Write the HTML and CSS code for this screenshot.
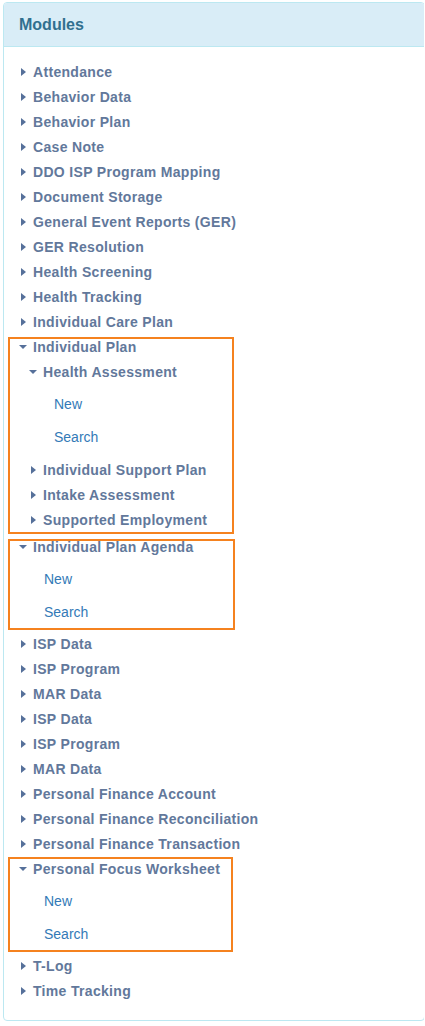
FILE: index.html
```html
<!DOCTYPE html>
<html>
<head>
<meta charset="utf-8">
<link rel="stylesheet" href="styles.css">
</head>
<body>
<div class="panel">
  <div class="panel-heading"><h3 class="panel-title">Modules</h3></div>
  <div class="panel-body">
    <ul class="tree">
      <li><a class="row"><span class="caret"></span>Attendance</a></li>
      <li><a class="row"><span class="caret"></span>Behavior Data</a></li>
      <li><a class="row"><span class="caret"></span>Behavior Plan</a></li>
      <li><a class="row"><span class="caret"></span>Case Note</a></li>
      <li><a class="row"><span class="caret"></span>DDO ISP Program Mapping</a></li>
      <li><a class="row"><span class="caret"></span>Document Storage</a></li>
      <li><a class="row"><span class="caret"></span>General Event Reports (GER)</a></li>
      <li><a class="row"><span class="caret"></span>GER Resolution</a></li>
      <li><a class="row"><span class="caret"></span>Health Screening</a></li>
      <li><a class="row"><span class="caret"></span>Health Tracking</a></li>
      <li><a class="row"><span class="caret"></span>Individual Care Plan</a></li>
      <li class="hl hl-1">
        <a class="row"><span class="caret down"></span>Individual Plan</a>
        <ul class="tree sub">
          <li>
            <a class="row"><span class="caret down"></span>Health Assessment</a>
            <ul class="leaves leaves-deep">
              <li><a class="leaf">New</a></li>
              <li><a class="leaf">Search</a></li>
            </ul>
          </li>
          <li><a class="row"><span class="caret"></span>Individual Support Plan</a></li>
          <li><a class="row"><span class="caret"></span>Intake Assessment</a></li>
          <li><a class="row"><span class="caret"></span>Supported Employment</a></li>
        </ul>
      </li>
      <li class="hl hl-2">
        <a class="row"><span class="caret down"></span>Individual Plan Agenda</a>
        <ul class="leaves">
          <li><a class="leaf">New</a></li>
          <li><a class="leaf">Search</a></li>
        </ul>
      </li>
      <li><a class="row"><span class="caret"></span>ISP Data</a></li>
      <li><a class="row"><span class="caret"></span>ISP Program</a></li>
      <li><a class="row"><span class="caret"></span>MAR Data</a></li>
      <li><a class="row"><span class="caret"></span>ISP Data</a></li>
      <li><a class="row"><span class="caret"></span>ISP Program</a></li>
      <li><a class="row"><span class="caret"></span>MAR Data</a></li>
      <li><a class="row"><span class="caret"></span>Personal Finance Account</a></li>
      <li><a class="row"><span class="caret"></span>Personal Finance Reconciliation</a></li>
      <li><a class="row"><span class="caret"></span>Personal Finance Transaction</a></li>
      <li class="hl hl-3">
        <a class="row"><span class="caret down"></span>Personal Focus Worksheet</a>
        <ul class="leaves">
          <li><a class="leaf">New</a></li>
          <li><a class="leaf">Search</a></li>
        </ul>
      </li>
      <li><a class="row"><span class="caret"></span>T-Log</a></li>
      <li><a class="row"><span class="caret"></span>Time Tracking</a></li>
    </ul>
  </div>
</div>
</body>
</html>
```

FILE: styles.css
```css
html, body {
  background: #ffffff;
}
body {
  margin: 2px 1px 0 3px;
  font-family: "Liberation Sans", Arial, sans-serif;
}
.panel {
  width: 422px;
  box-sizing: border-box;
  border: 1px solid #bce8f1;
  border-radius: 4px;
  background: #fff;
}
.panel-heading {
  background: #d9edf7;
  border-bottom: 1px solid #bce8f1;
  border-radius: 3px 3px 0 0;
  padding: 12px 15px;
}
.panel-title {
  margin: 0;
  font-size: 16px;
  line-height: 19px;
  font-weight: bold;
  color: #31708f;
}
.panel-body {
  padding: 12px 0 17px 0;
}
.tree, .leaves {
  list-style: none;
  margin: 0;
  padding: 0;
}
.tree.sub {
  padding-left: 10px;
}
.row {
  display: flex;
  align-items: center;
  height: 25px;
  padding-left: 15px;
  font-size: 14px;
  font-weight: bold;
  letter-spacing: 0.32px;
  color: #62789b;
  cursor: pointer;
}
.caret {
  width: 8px;
  height: 8px;
  margin-right: 6px;
  display: flex;
  align-items: center;
  justify-content: center;
  flex: none;
}
.caret::before {
  content: "";
  display: block;
  width: 0;
  height: 0;
  border-left: 5px solid #56709a;
  border-top: 4px solid transparent;
  border-bottom: 4px solid transparent;
}
.caret.down::before {
  border-left: 4px solid transparent;
  border-right: 4px solid transparent;
  border-top: 4px solid #56709a;
  border-bottom: 0;
}
.leaves {
  padding: 4px 0 2px 40px;
}
.leaves.leaves-deep {
  padding-bottom: 3px;
}
.leaf {
  display: block;
  height: 33px;
  line-height: 33px;
  font-size: 14px;
  color: #337ab7;
  cursor: pointer;
}
.hl {
  position: relative;
}
.hl::after {
  content: "";
  position: absolute;
  left: 4px;
  border: 2px solid #f5821f;
  pointer-events: none;
}
.hl-1::after {
  top: 3px;
  width: 222px;
  height: 193px;
}
.hl-2 {
  margin-top: 2px;
}
.hl-2::after {
  top: 5px;
  width: 223px;
  height: 87px;
}
.hl-3::after {
  top: 1px;
  width: 221px;
  height: 91px;
}
```
